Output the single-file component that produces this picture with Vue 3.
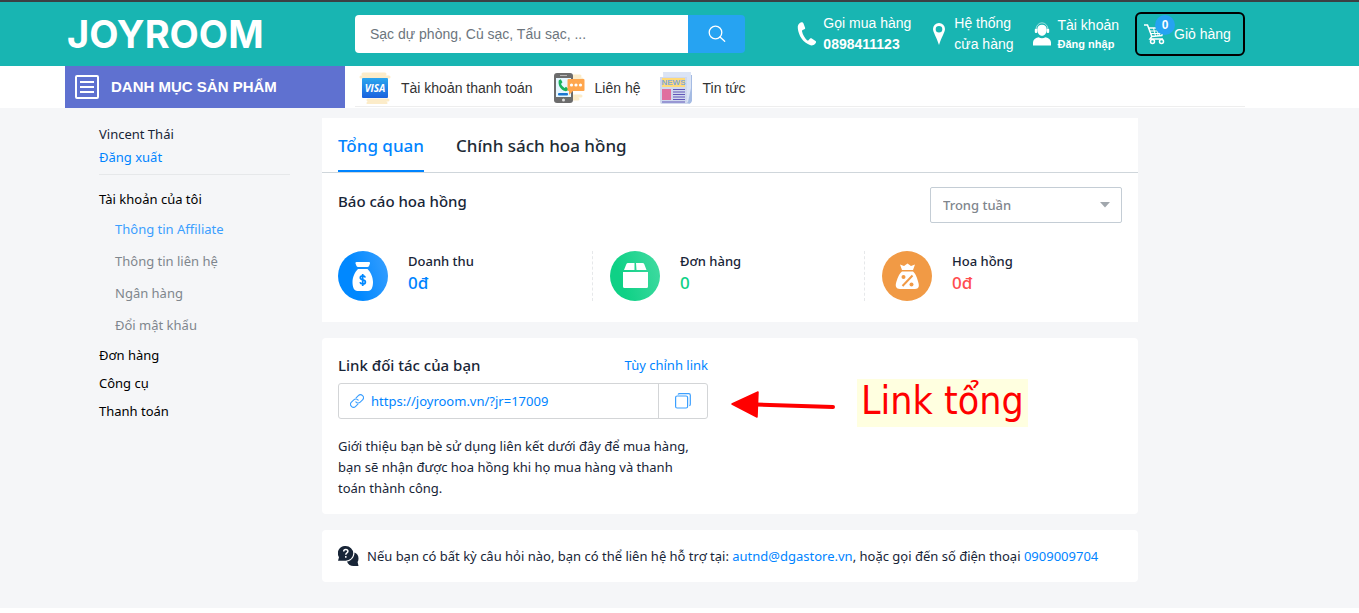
<script setup>
import { ref } from 'vue'

const query = ref('')
const period = ref('week')
const link = ref('https://joyroom.vn/?jr=17009')
const accountLinks = ['Thông tin Affiliate', 'Thông tin liên hệ', 'Ngân hàng', 'Đổi mật khẩu']
const sections = ['Đơn hàng', 'Công cụ', 'Thanh toán']
</script>

<template>
  <div class="page">
    <header class="top">
      <a class="logo" href="#">JOYROOM</a>
      <form class="search" role="search" @submit.prevent>
        <input v-model="query" type="text" aria-label="Tìm kiếm" placeholder="Sạc dự phòng, Củ sạc, Tẩu sạc, ..." />
        <button type="submit" aria-label="Tìm kiếm">
          <svg width="18" height="18" viewBox="0 0 18 18" fill="none" stroke="#fff" stroke-width="1.3">
            <circle cx="7.5" cy="7.5" r="6.3" />
            <path d="M12 12l4.7 4.3" stroke-linecap="round" />
          </svg>
        </button>
      </form>
      <nav class="tools">
        <a class="tool phone" href="#">
          <svg width="20" height="24" viewBox="0 0 20 24" fill="#fff">
            <path d="M3.6.5C1.500 1.600.5 3.400.8 6.200 1.500 13.500 6 20.500 13.500 23.300c2 .5 4.600-.9 5.500-2.900.2-.6 0-1-.5-1.400l-3.700-2.600c-.6-.4-1.200-.3-1.700.2l-1.600 1.600c-.5.400-1 .4-1.500 0C7.500 15.800 5.700 12.600 5 9.300c-.1-.6.1-1 .7-1.300l1.700-.8c.6-.3.9-.8.7-1.500L6.400 1.200C6.100.4 5.300.1 4.500.3z" />
          </svg>
          <span>Gọi mua hàng<br /><b>0898411123</b></span>
        </a>
        <a class="tool store" href="#">
          <svg width="12" height="22" viewBox="0 0 12 22">
            <path fill="#fff" fill-rule="evenodd" d="M6 0a6 6 0 0 0-6 6c0 3 3.500 8 6 16 2.500-8 6-13 6-16a6 6 0 0 0-6-6zm0 3a3.300 3.300 0 1 1 0 6.600A3.300 3.300 0 0 1 6 3z" />
          </svg>
          <span>Hệ thống<br />cửa hàng</span>
        </a>
        <a class="tool account" href="#">
          <svg width="18" height="24" viewBox="0 0 18 24" fill="#fff">
            <path d="M3 7.500a6 6.700 0 0 1 12 0" fill="none" stroke="#fff" stroke-opacity=".7" stroke-width=".8" />
            <path d="M9 2.800c3 0 4.700 2 4.700 4.700 0 3.500-2 6.300-4.700 6.300S4.300 11 4.300 7.500C4.300 4.800 6 2.800 9 2.800z" />
            <rect x="1.800" y="6.800" width="2.500" height="4.200" rx="1" />
            <rect x="13.700" y="6.800" width="2.500" height="4.200" rx="1" />
            <path d="M0 23.500v-3c0-2.800 2-4.500 5.500-5.300q3.500 2 7 0c3.500.8 5.500 2.500 5.500 5.300v3z" />
          </svg>
          <span>Tài khoản<br /><b class="small">Đăng nhập</b></span>
        </a>
        <a class="cart" href="#">
          <span class="cart-icon">
            <svg width="24" height="22" viewBox="0 0 24 22" fill="none" stroke="#fff" stroke-width="1.5">
              <path d="M1 2h3.500l4.300 11.500L7 16h13M5.500 5h15.700l-2.400 7.500-10.300 1" />
              <path d="M6.500 8h13.700M7.500 10.500h12M10.500 5l2 8M14.500 5l.5 8M18 5l-1.500 7.500" stroke-width="1" />
              <circle cx="9.500" cy="18.500" r="2" />
              <circle cx="18.500" cy="18.500" r="2" />
            </svg>
            <span class="badge">0</span>
          </span>
          <span>Giỏ hàng</span>
        </a>
      </nav>
    </header>

    <div class="bar">
      <button class="catalog" type="button">
        <svg width="24" height="24" viewBox="0 0 24 24" fill="none" stroke="#fff" stroke-width="2">
          <rect x="1" y="1" width="22" height="22" rx="1" />
          <path d="M5 7h14M5 12h14M5 17h14" />
        </svg>
        <span>DANH MỤC SẢN PHẨM</span>
      </button>
      <nav class="quick">
        <a href="#">
          <svg width="32" height="32" viewBox="0 0 32 32">
            <defs>
              <linearGradient id="visa" x1="0" y1="0" x2="0" y2="1">
                <stop offset="0" stop-color="#2ba6ee" />
                <stop offset="1" stop-color="#1a62de" />
              </linearGradient>
            </defs>
            <path stroke="#fcecc9" stroke-width="3" stroke-linecap="round" d="M4 2h22M2 5h28M9 28h20M9 31h18" />
            <rect x="3" y="6" width="26" height="20" rx="1" fill="url(#visa)" />
            <text x="16" y="20" text-anchor="middle" fill="#fff" class="visa">VISA</text>
          </svg>
          <span>Tài khoản thanh toán</span>
        </a>
        <a href="#">
          <svg width="32" height="32" viewBox="0 0 32 32">
            <path stroke="#fcecc9" stroke-width="3" stroke-linecap="round" d="M20 4h7M20 7h9M19 24h9M20 27h5" />
            <rect x="1" y="1" width="19" height="30" rx="3" fill="#6c6c6c" />
            <path stroke="#b9b9b9" stroke-width="1" d="M7 3.500h7" />
            <rect x="3" y="6" width="15" height="19" fill="#e6f6ff" />
            <circle cx="10.500" cy="28" r="1.500" fill="#ddd" />
            <rect x="5" y="21" width="10" height="2.500" rx="1" fill="#1976d2" />
            <path d="M5.800 8.300l2-1 1.700 3-1.500 1.600q1.300 2.800 3.500 4l1.500-1.200 2.500 2.200q-1 2.600-3.500 2.200C7.500 17.800 4.700 13 5.800 8.300z" fill="#18b25b" />
            <path d="M15.500 7h15q1 0 1 1v10q0 1-1 1H20l-4 4v-4h-.5q-1 0-1-1V8q0-1 1-1z" fill="#ffa64d" />
            <g fill="#fff"><circle cx="18.500" cy="13" r="1.600" /><circle cx="23" cy="13" r="1.600" /><circle cx="27.500" cy="13" r="1.600" /></g>
          </svg>
          <span>Liên hệ</span>
        </a>
        <a href="#">
          <svg width="32" height="32" viewBox="0 0 32 32">
            <path fill="#a5bbe3" d="M27 3h5v26q-1 3-3 3t-3-3z" />
            <path fill="#dbe4f5" d="M3 0h28v16l-3 14-24-3z" />
            <path fill="#d0d9ee" d="M0 5h27v24q0 2 2 3H2q-2 0-2-2z" />
            <rect x="2" y="6" width="23" height="9" fill="#ffda79" />
            <text x="13.500" y="13" text-anchor="middle" fill="#84a8d8" class="news">NEWS</text>
            <rect x="2" y="17" width="9" height="11" fill="#e0709f" />
            <path stroke="#6156b8" stroke-width="1.200" d="M13 17.500h12M13 20h12M13 22.500h12M13 25h12M13 27.500h12M2 30h23" />
          </svg>
          <span>Tin tức</span>
        </a>
      </nav>
    </div>

    <div class="content">
      <aside class="side">
        <div class="user">
          <div>Vincent Thái</div>
          <a href="#">Đăng xuất</a>
        </div>
        <nav class="menu">
          <a class="head" href="#">Tài khoản của tôi</a>
          <a v-for="(item, i) in accountLinks" :key="item" href="#" class="sub" :class="{ active: i === 0 }">{{ item }}</a>
          <a v-for="item in sections" :key="item" class="head" href="#">{{ item }}</a>
        </nav>
      </aside>

      <main class="main">
        <section class="card overview">
          <div class="tabs" role="tablist">
            <button type="button" role="tab" aria-selected="true" class="tab active">Tổng quan</button>
            <button type="button" role="tab" aria-selected="false" class="tab">Chính sách hoa hồng</button>
          </div>
          <div class="report">
            <h2>Báo cáo hoa hồng</h2>
            <div class="select">
              <select v-model="period" aria-label="Thời gian">
                <option value="week">Trong tuần</option>
              </select>
              <svg width="10" height="6" viewBox="0 0 10 6"><path d="M0 0h10L5 5.500z" fill="#a1a7ad" /></svg>
            </div>
          </div>
          <div class="stats">
            <div class="stat">
              <svg width="50" height="50" viewBox="0 0 50 50">
                <defs>
                  <linearGradient id="blue" x1="0" y1=".6" x2="1" y2=".3">
                    <stop offset=".3" stop-color="#0088ff" />
                    <stop offset="1" stop-color="#339dff" />
                  </linearGradient>
                </defs>
                <circle cx="25" cy="25" r="25" fill="url(#blue)" />
                <path fill="#fff" d="M18.500 11h12.500q1.500 0 1 1.500l-1 2.500q-.4 1-1.500 1H20q-1 0-1.500-1l-1-2.500q-.5-1.500 1-1.500zM20 18h9.500c3 3 5.500 8 5.500 13 0 5-1.500 9-5 9H19.500c-3.500 0-5-4-5-9 0-5 2.500-10 5.500-13z" />
                <path fill="none" stroke="#0088ff" stroke-width="1.700" d="M27.300 26.500q-.6-1.600-2.600-1.600-2.400 0-2.400 1.900 0 1.600 2.500 2 2.600.4 2.600 2.200 0 2-2.600 2-2.200 0-2.800-1.700M24.700 23v12" />
              </svg>
              <div><h3>Doanh thu</h3><strong class="c-blue">0đ</strong></div>
            </div>
            <div class="stat">
              <svg width="50" height="50" viewBox="0 0 50 50">
                <defs>
                  <linearGradient id="green" x1="0" y1=".6" x2="1" y2=".3">
                    <stop offset=".2" stop-color="#0fd186" />
                    <stop offset="1" stop-color="#3fdaa0" />
                  </linearGradient>
                </defs>
                <circle cx="25" cy="25" r="25" fill="url(#green)" />
                <path fill="#fff" d="M18 12h6.500v7H14l2.300-5.800Q16.800 12 18 12zM26 12h6.500q1.300 0 1.800 1.200L36.500 19H26.500zM13 21h25v14.500q0 1.500-1.500 1.500h-22q-1.500 0-1.500-1.500z" />
              </svg>
              <div><h3>Đơn hàng</h3><strong class="c-green">0</strong></div>
            </div>
            <div class="stat">
              <svg width="50" height="50" viewBox="0 0 50 50">
                <circle cx="25" cy="25" r="25" fill="#f19a45" />
                <path fill="#fff" d="M18 13.500l4 1.500 3.500-2.500L29 15l4-1.500-2 5.500H20zM20 20.500h11q3 2 5.200 10.500c1.300 4 .8 7-3.200 7H18c-4 0-5-3-3.700-7q2.500-8.500 5.700-10.500z" />
                <path stroke="#f19a45" stroke-width="2" d="M30.500 24.500L20.500 35" />
                <circle cx="21.500" cy="26" r="2" fill="#f19a45" />
                <circle cx="29.500" cy="33.500" r="2" fill="#f19a45" />
              </svg>
              <div><h3>Hoa hồng</h3><strong class="c-red">0đ</strong></div>
            </div>
          </div>
        </section>

        <section class="card partner">
          <div class="partner-body">
            <div class="partner-head">
              <h2>Link đối tác của bạn</h2>
              <a href="#">Tùy chỉnh link</a>
            </div>
            <div class="link-box">
              <label for="partner-link" aria-label="Link đối tác của bạn">
                <svg width="14" height="14" viewBox="0 0 24 24" fill="none" stroke="#3b9fff" stroke-width="1.900" stroke-linecap="round">
                  <path d="M10 13.500a5 5 0 0 0 7.500.5l4-4a5 5 0 0 0-7.200-7.200l-3.800 3.800" />
                  <path d="M14 10.500a5 5 0 0 0-7.500-.5l-4 4a5 5 0 0 0 7.200 7.200l3.800-3.800" />
                </svg>
              </label>
              <input id="partner-link" v-model="link" type="text" readonly />
              <button type="button" aria-label="Sao chép">
                <svg width="16" height="16" viewBox="0 0 16 16" fill="none" stroke="#3b9fff" stroke-width="1.200">
                  <rect x=".6" y="3" width="12" height="12" rx="1.500" />
                  <path d="M3 1.500Q3.500.7 4.500.7h9.300q1.500 0 1.500 1.500v9q0 1-.9 1.600" />
                </svg>
              </button>
            </div>
            <p>Giới thiệu bạn bè sử dụng liên kết dưới đây để mua hàng, bạn sẽ nhận được hoa hồng khi họ mua hàng và thanh toán thành công.</p>
          </div>
          <svg class="arrow" width="106" height="28" viewBox="0 0 106 28">
            <path d="M26 14.500l77 2.500" stroke="#f00" stroke-width="4" stroke-linecap="round" />
            <path d="M2 14L28 2 27 27z" fill="#f00" stroke="#f00" stroke-width="1.500" stroke-linejoin="round" />
          </svg>
          <div class="note">Link tổng</div>
        </section>

        <section class="card help">
          <svg width="21" height="20" viewBox="0 0 21 20">
            <path fill="#182537" d="M16.500 6.500q4 1.500 4 6 0 2 -.9 3.500L20.500 20h-5c-3 0-5.500-1.500-6.500-4.500 4.500-.5 7.500-4.500 7.500-9z" />
            <path fill="#182537" d="M7.700 0a7.500 7.300 0 0 1 0 14.700H0l1-3.500A7.500 7.300 0 0 1 7.700 0z" />
            <path fill="none" stroke="#fff" stroke-width="1.500" d="M5.700 5.500q0-2 2.100-2t2.100 1.800q0 1-1 1.600T7.800 8.800M7.800 10v1.700" />
          </svg>
          <p>Nếu bạn có bất kỳ câu hỏi nào, bạn có thể liên hệ hỗ trợ tại: <a href="#">autnd@dgastore.vn</a>, hoặc gọi đến số điện thoại <a href="#">0909009704</a></p>
        </section>
      </main>
    </div>
  </div>
</template>

<style>
body {
  background: #fff;
}
</style>

<style scoped>
.page {
  border-top: 2px solid #3b4043;
  font-family: "Noto Sans", sans-serif;
  font-size: 13px;
  line-height: 21px;
  color: #182537;
}
.page * {
  box-sizing: border-box;
}
a {
  color: #0084ff;
  text-decoration: none;
}
h2, h3, p {
  margin: 0;
}
button, input, select {
  font: inherit;
  border: 0;
  padding: 0;
  background: none;
}
svg {
  flex: none;
}

.top {
  display: flex;
  align-items: center;
  height: 64px;
  padding: 0 114px 0 65px;
  background: #18b5b2;
  font: 14px/21px "Liberation Sans", Arial, sans-serif;
}
.logo {
  width: 290px;
  padding-left: 2px;
  color: #fff;
  font: 700 38px/40px Inter, sans-serif;
}
.search {
  display: flex;
  width: 390px;
  height: 38px;
}
.search input {
  flex: 1;
  min-width: 0;
  padding: 0 15px;
  background: #fff;
  border-radius: 4px 0 0 4px;
  color: #495057;
}
.search input::placeholder {
  color: #6c757d;
  opacity: 1;
}
.search button {
  display: flex;
  align-items: center;
  justify-content: center;
  width: 57px;
  background: #26a3f2;
  border-radius: 0 4px 4px 0;
}
.tools {
  flex: 1;
  display: flex;
  align-items: center;
  justify-content: flex-end;
  white-space: nowrap;
}
.tool, .cart {
  display: flex;
  align-items: center;
  color: #fff;
}
.tool .small {
  font-size: 11px;
}
.tool.account span {
  line-height: 18px;
}
.phone {
  gap: 6px;
  margin-right: 22px;
}
.store {
  gap: 9px;
  margin-right: 19px;
}
.account {
  gap: 7px;
  margin-right: 16px;
}
.cart {
  width: 110px;
  height: 44px;
  padding-left: 6px;
  gap: 7px;
  border: 2px solid #000;
  border-radius: 6px;
}
.cart-icon {
  position: relative;
  display: flex;
}
.badge {
  position: absolute;
  top: -8px;
  left: 12px;
  width: 20px;
  height: 20px;
  border-radius: 50%;
  background: #26a3f2;
  font: 700 12px/20px "Liberation Sans", Arial, sans-serif;
  text-align: center;
}

.bar {
  display: flex;
  gap: 10px;
  height: 42px;
  padding: 0 114px 0 65px;
  font: 14px/20px "Liberation Sans", Arial, sans-serif;
}
.catalog {
  display: flex;
  align-items: center;
  gap: 12px;
  width: 280px;
  padding-left: 10px;
  background: #5f71d0;
  color: #fff;
  font-weight: 700;
  font-size: 15px;
}
.quick {
  flex: 1;
  display: flex;
  align-items: center;
  gap: 20px;
  height: 41px;
  padding: 3px 0 0 4px;
  border-bottom: 1px solid #eee;
}
.quick a {
  display: flex;
  align-items: center;
  gap: 10px;
  color: #333;
}
.visa {
  font: italic 700 10px "Open Sans", sans-serif;
}
.news {
  font: 700 8px "Liberation Sans", sans-serif;
}

.content {
  display: flex;
  gap: 32px;
  min-height: 500px;
  padding: 10px 221px 26px 99px;
  background: #f5f6f8;
}
.side {
  width: 191px;
}
.user {
  padding: 5px 0;
  border-bottom: 1px solid #e6e8ea;
  line-height: 23px;
}
.user a {
  display: block;
}
.menu {
  padding-top: 10px;
}
.menu a {
  display: block;
}
.menu .head {
  color: #000;
  line-height: 28px;
}
.menu .sub {
  padding-left: 16px;
  color: #7f868d;
  line-height: 32px;
}
.menu .active {
  color: #3b9fff;
}
.main {
  flex: 1;
  display: flex;
  flex-direction: column;
  gap: 16px;
  min-width: 0;
}
.card {
  background: #fff;
  border-radius: 4px;
}
.overview {
  border-radius: 0;
  padding-bottom: 21px;
}
.tabs {
  display: flex;
  gap: 32px;
  height: 55px;
  padding: 0 16px;
  border-bottom: 1px solid #cfd6db;
}
.tab {
  padding-top: 2px;
  border-bottom: 2px solid transparent;
  color: #212b35;
  font-size: 17px;
  font-weight: 500;
}
.tab.active {
  border-color: #0084ff;
  color: #0084ff;
}
.report {
  display: flex;
  justify-content: space-between;
  padding: 14px 16px 0;
}
h2 {
  font-size: 15px;
  font-weight: 500;
  line-height: 28px;
}
.select {
  position: relative;
  width: 192px;
  height: 36px;
}
.select select {
  width: 100%;
  height: 100%;
  padding: 0 12px;
  border: 1px solid #c4cdd5;
  border-radius: 2px;
  appearance: none;
  background: #fff;
  color: #7f868d;
  font-weight: 500;
}
.select svg {
  position: absolute;
  top: 15px;
  right: 12px;
  pointer-events: none;
}
.stats {
  display: grid;
  grid-template-columns: repeat(3, 1fr);
  padding-top: 28px;
}
.stat {
  position: relative;
  display: flex;
  gap: 20px;
  height: 50px;
  padding-left: 16px;
}
.stat + .stat::before {
  content: "";
  position: absolute;
  left: -2px;
  height: 50px;
  border-left: 1px dashed #e6e8ea;
}
h3 {
  font-size: 13px;
  font-weight: 500;
  line-height: 21px;
}
.stat strong {
  display: block;
  font-size: 17px;
  font-weight: 500;
  line-height: 22px;
}
.c-blue { color: #0084ff; }
.c-green { color: #0fd186; }
.c-red { color: #ff4d4f; }

.partner {
  position: relative;
  padding: 13px 16px 15px;
}
.partner-body {
  width: 370px;
}
.partner-head {
  display: flex;
  align-items: center;
  justify-content: space-between;
}
.partner p {
  max-width: 360px;
}
.link-box {
  display: flex;
  height: 36px;
  margin: 4px 0 17px;
  border: 1px solid #d3d5d7;
  border-radius: 3px;
}
.link-box label {
  display: flex;
  align-items: center;
  padding: 0 7px 0 11px;
}
.link-box input {
  flex: 1;
  min-width: 0;
  color: #0084ff;
}
.link-box button {
  display: flex;
  align-items: center;
  justify-content: center;
  width: 49px;
  border-left: 1px solid #d3d5d7;
}
.arrow {
  position: absolute;
  top: 52px;
  left: 408px;
}
.note {
  position: absolute;
  top: 41px;
  left: 535px;
  padding: 0 4px 4px;
  background: #ffffe0;
  color: #f00;
  font: 39px/44px "DejaVu Sans Condensed", "DejaVu Sans", sans-serif;
  white-space: nowrap;
}
.help {
  display: flex;
  align-items: center;
  gap: 8px;
  min-height: 52px;
  padding: 0 16px;
}
</style>
